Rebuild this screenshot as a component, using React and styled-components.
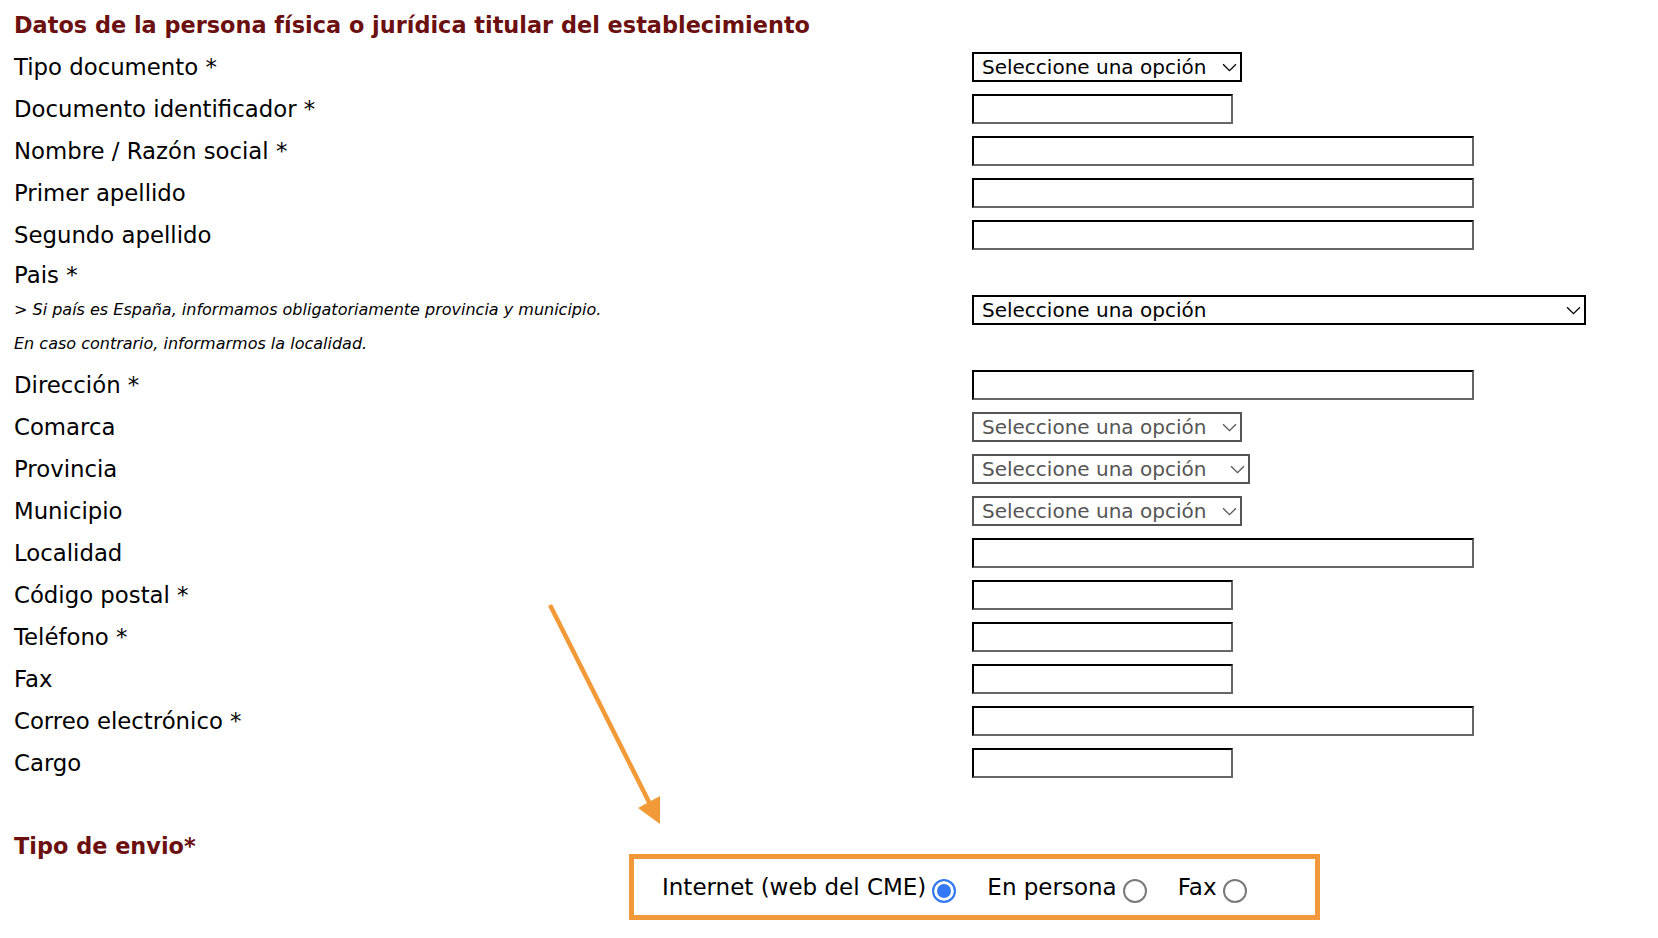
import React from 'react';
import styled, { createGlobalStyle } from 'styled-components';

const GlobalStyle = createGlobalStyle`
  body {
    margin: 0;
    background: #fff;
    font-family: "DejaVu Sans", Verdana, sans-serif;
    color: #000;
  }
`;

const fields = [
  { label: 'Tipo documento *', kind: 'select', width: 270 },
  { label: 'Documento identificador *', kind: 'input', width: 261 },
  { label: 'Nombre / Razón social *', kind: 'input', width: 502 },
  { label: 'Primer apellido', kind: 'input', width: 502 },
  { label: 'Segundo apellido', kind: 'input', width: 502 },
];

const fieldsAfter = [
  { label: 'Dirección *', kind: 'input', width: 502 },
  { label: 'Comarca', kind: 'select', width: 270, disabled: true },
  { label: 'Provincia', kind: 'select', width: 278, disabled: true },
  { label: 'Municipio', kind: 'select', width: 270, disabled: true },
  { label: 'Localidad', kind: 'input', width: 502 },
  { label: 'Código postal *', kind: 'input', width: 261 },
  { label: 'Teléfono *', kind: 'input', width: 261 },
  { label: 'Fax', kind: 'input', width: 261 },
  { label: 'Correo electrónico *', kind: 'input', width: 502 },
  { label: 'Cargo', kind: 'input', width: 261 },
];

const envios = [
  { label: 'Internet (web del CME)', checked: true },
  { label: 'En persona' },
  { label: 'Fax' },
];

function Control({ field }) {
  if (field.kind === 'select') {
    return (
      <SelectWrap width={field.width}>
        <StSelect disabled={field.disabled} defaultValue="">
          <option value="">Seleccione una opción</option>
        </StSelect>
        <Chevron viewBox="0 0 14 8" disabled={field.disabled}>
          <polyline points="1,1 7,7 13,1" />
        </Chevron>
      </SelectWrap>
    );
  }
  return <StInput type="text" width={field.width} />;
}

export default function App() {
  return (
    <Page>
      <GlobalStyle />
      <Title>Datos de la persona física o jurídica titular del establecimiento</Title>

      {fields.map((f, i) => (
        <Row key={i}>
          <Label>{f.label}</Label>
          <Control field={f} />
        </Row>
      ))}

      <Row height={37}>
        <Label>Pais *</Label>
      </Row>
      <NoteRow>
        <Note>
          <NoteLine>&gt; Si país es España, informamos obligatoriamente provincia y municipio.</NoteLine>
          <NoteLine>En caso contrario, informarmos la localidad.</NoteLine>
        </Note>
        <PaisCell>
          <Control field={{ kind: 'select', width: 614 }} />
        </PaisCell>
      </NoteRow>

      {fieldsAfter.map((f, i) => (
        <Row key={i}>
          <Label>{f.label}</Label>
          <Control field={f} />
        </Row>
      ))}

      <SectionTitle>Tipo de envio*</SectionTitle>
      <EnvioBox>
        {envios.map((e, i) => (
          <RadioLabel key={i}>
            {e.label}
            <Radio type="radio" name="envio" defaultChecked={e.checked} />
          </RadioLabel>
        ))}
      </EnvioBox>

      <Arrow viewBox="0 0 1658 938">
        <line x1="550" y1="605" x2="651" y2="806" />
        <polygon points="660,824 638,808 660,796" />
      </Arrow>
    </Page>
  );
}

const Page = styled.div`
  position: relative;
  width: 1658px;
  min-height: 938px;
  box-sizing: border-box;
  padding: 4px 14px 0 14px;
`;

const Title = styled.h2`
  margin: 0;
  font-size: 22.4px;
  font-weight: bold;
  line-height: 42px;
  white-space: nowrap;
  color: #6b0f0f;
`;

const Row = styled.div`
  display: grid;
  grid-template-columns: 958px 1fr;
  align-items: center;
  height: ${props => props.height || 42}px;
`;

const Label = styled.div`
  font-size: 22.8px;
  line-height: 28px;
  white-space: nowrap;
`;

const NoteRow = styled.div`
  display: grid;
  grid-template-columns: 958px 1fr;
  align-items: start;
  height: 71px;
`;

const Note = styled.div`
  font-size: 16px;
  font-style: italic;
`;

const NoteLine = styled.div`
  line-height: 34px;
  white-space: nowrap;
`;

const PaisCell = styled.div`
  padding-top: 2px;
`;

const SelectWrap = styled.div`
  position: relative;
  width: ${props => props.width}px;
  height: 30px;
`;

const StSelect = styled.select`
  appearance: none;
  -webkit-appearance: none;
  box-sizing: border-box;
  width: 100%;
  height: 30px;
  margin: 0;
  padding: 0 28px 0 8px;
  border: 2px solid ${props => props.disabled ? '#555' : '#000'};
  border-radius: 0;
  background: #fff;
  font-family: "DejaVu Sans", Verdana, sans-serif;
  font-size: 20px;
  color: ${props => props.disabled ? '#555' : '#000'};
  opacity: 1;
`;

const Chevron = styled.svg`
  position: absolute;
  right: 5px;
  top: 11px;
  width: 15px;
  height: 9px;
  pointer-events: none;
  fill: none;
  stroke: ${props => props.disabled ? '#555' : '#000'};
  stroke-width: 1.2;
`;

const StInput = styled.input`
  box-sizing: border-box;
  width: ${props => props.width}px;
  height: 30px;
  margin: 0;
  padding: 0 6px;
  border-style: solid;
  border-width: 2px;
  border-color: #000 #666 #666 #000;
  border-radius: 0;
  background: #fff;
  font-family: "DejaVu Sans", Verdana, sans-serif;
  font-size: 20px;
`;

const SectionTitle = styled.div`
  margin-top: 52px;
  font-size: 22.4px;
  font-weight: bold;
  line-height: 20px;
  height: 20px;
  color: #6b0f0f;
`;

const EnvioBox = styled.div`
  display: flex;
  align-items: center;
  gap: 31px;
  box-sizing: border-box;
  width: 691px;
  height: 66px;
  margin-left: 615px;
  margin-top: -2px;
  padding-left: 28px;
  border: 5px solid #f0983a;
`;

const RadioLabel = styled.label`
  display: flex;
  align-items: center;
  gap: 6px;
  font-size: 23px;
  line-height: 28px;
  white-space: nowrap;
`;

const Radio = styled.input`
  appearance: none;
  -webkit-appearance: none;
  box-sizing: border-box;
  width: 24px;
  height: 24px;
  margin: 7px 0 0 0;
  border: 2px solid #7a7a7a;
  border-radius: 50%;
  background: #fff;

  &:checked {
    border-color: #3478f6;
    background: #3478f6;
    box-shadow: inset 0 0 0 3px #fff;
  }
`;

const Arrow = styled.svg`
  position: absolute;
  left: 0;
  top: 0;
  width: 1658px;
  height: 938px;
  pointer-events: none;

  line {
    stroke: #f29a38;
    stroke-width: 4.5;
  }
  polygon {
    fill: #f29a38;
  }
`;
